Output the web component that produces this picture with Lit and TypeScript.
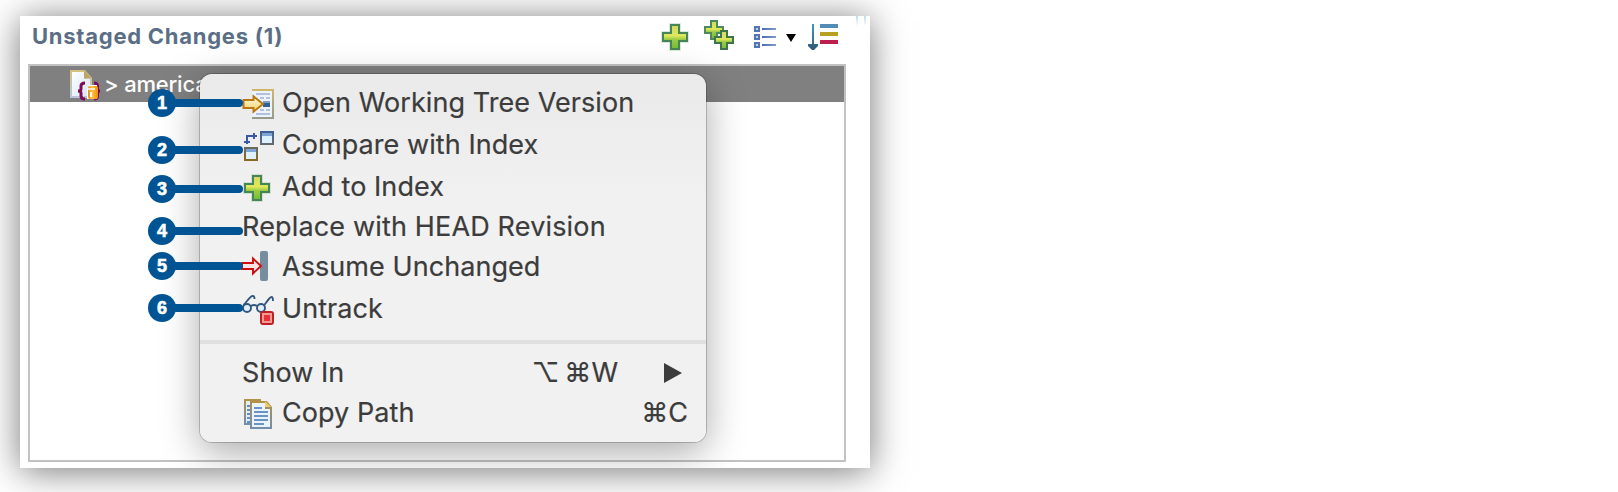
import { LitElement, html, css, svg, nothing } from "lit";
import { customElement, property } from "lit/decorators.js";

const plus = svg`
  <path d="M9 1h10v8h8v10h-8v8H9v-8H1V9h8z" fill="none" stroke="#8fb79a" stroke-opacity=".45" stroke-width="1.400"/>
  <path d="M10 2h8v8h8v8h-8v8h-8v-8H2v-8h8z" fill="url(#g)" stroke="#468556" stroke-width="2"/>`;
const plusGradient = svg`<defs><linearGradient id="g" x1="0" y1="0" x2="0" y2="1">
  <stop offset="0" stop-color="#d0d860"/><stop offset=".45" stop-color="#dfe95c"/>
  <stop offset=".6" stop-color="#9ccb45"/><stop offset="1" stop-color="#74bb35"/></linearGradient></defs>`;

const icons: Record<string, unknown> = {
  open: svg`
    <defs><linearGradient id="e" x1="0" y1="0" x2="0" y2="1"><stop offset="0" stop-color="#cdb86b"/><stop offset="1" stop-color="#979a8c"/></linearGradient>
    <linearGradient id="a" x1="0" y1="0" x2="0" y2="1"><stop offset="0" stop-color="#fffbe6"/><stop offset="1" stop-color="#f6cf62"/></linearGradient></defs>
    <path d="M10 3h22v30H10z" fill="url(#e)"/><path d="M10 5h20v26H10z" fill="#edf3fb"/>
    <path d="M14 8h14M18 12h4M24 12h4M18 24h4M24 24h4M14 28h14" stroke="#b3c0dd" stroke-width="2"/>
    <path d="M21 15h7v6h-7z" fill="#2f5f9c"/><path d="M21 15h7v2h-7z" fill="#7a9cc6"/>
    <path d="M1.500 14h10V10.300L21 18l-9.500 7.700V22h-10z" fill="url(#a)" stroke="#b87a10" stroke-width="2"/>`,
  compare: svg`
    <defs><linearGradient id="w" x1="0" y1="0" x2="0" y2="1"><stop offset="0" stop-color="#3d5f95"/><stop offset=".35" stop-color="#5b6a78"/><stop offset="1" stop-color="#8c6a1e"/></linearGradient></defs>
    <path d="M18 3h14v14H18zM2 19h14v14H2z" fill="url(#w)"/>
    <path d="M20 8h10v7H20zM4 24h10v7H4z" fill="#dff1fd"/>
    <path d="M20 5h10v3H20zM4 21h10v3H4z" fill="#7fa5d6"/>
    <path d="M5 16V8h10M2 14h6M12 5v6" fill="none" stroke="#3a57a8" stroke-width="2"/>`,
  plus: svg`${plusGradient}<g transform="translate(1 4)">${plus}</g>`,
  add: svg`${plusGradient}${plus}`,
  addAll: svg`${plusGradient}
    <path d="M7 1h6v6h6v6h-6v6H7v-6H1V7h6z" fill="url(#g)" stroke="#4d8a5e" stroke-width="2"/>
    <path d="M7 1h6v6h6v6h-6v6H7v-6H1V7h6z" transform="translate(10 10)" fill="url(#g)" stroke="#3f7450" stroke-width="2"/>`,
  assume: svg`<rect x="18" y="1" width="8" height="30" rx="2" fill="#778c9c"/>
    <path d="M0 13h11V8.500l8 7.500-8 7.500V19H0z" fill="#fbe3e3" stroke="#d00d0d" stroke-width="1.900"/>`,
  untrack: svg`<g fill="none" stroke="#34557d" stroke-width="1.900">
    <circle cx="5" cy="16" r="4" fill="#e1edf7"/><circle cx="19" cy="16" r="4" fill="#e1edf7"/>
    <path d="M9 14q3-2 6 0M1.500 13C4 11 8 4 10.500 4q2-.5 2 3M22 13.500C24 11 27.500 5 29.500 5q1.500 0 1.500 4"/></g>
    <rect x="19" y="20" width="12" height="12" rx="2" fill="#f0b9b4" stroke="#bd2025" stroke-width="2"/>
    <path d="M21 22h8v8h-8z" fill="#e8313a"/><path d="M21 22h8v8h-8z" fill="none" stroke="#f39a94" stroke-width="2"/>`,
  copy: svg`
    <defs><linearGradient id="c" x1="0" y1="0" x2="0" y2="1"><stop offset="0" stop-color="#b39245"/><stop offset="1" stop-color="#708eae"/></linearGradient></defs>
    <path d="M2 3h17v26H2z" fill="url(#c)"/><path d="M4 5h12v22H4z" fill="#e4eef9"/>
    <path d="M5 10h3M5 14h3M5 18h3M5 22h3M5 26h3" stroke="#5f8fc4" stroke-width="2"/>
    <path d="M8 5h17l5 6v22H8z" fill="url(#c)"/><path d="M10 7h13v6h5v18H10z" fill="#eaf3fc"/>
    <path d="M23 5l6 6h-6z" fill="#f0cb70"/>
    <path d="M12 12h8M12 16h14M12 20h14M12 24h14M12 28h10" stroke="#6a94c4" stroke-width="2"/>`,
  list: svg`<defs><linearGradient id="l"><stop offset="0" stop-color="#4c6eae"/><stop offset="1" stop-color="#7c9ccc"/></linearGradient></defs>
    <path d="M0 0h6v6H0zM0 8h6v6H0zM0 16h6v6H0z" fill="#5474b2"/><path d="M2 2h2v2H2zM2 10h2v2H2zM2 18h2v2H2z" fill="#c3d0ea"/>
    <path d="M8 2h14v2H8zM8 10h14v2H8zM8 18h14v2H8z" fill="url(#l)"/>`,
  caret: svg`<path d="M0 0h10L5 8z" fill="#000"/>`,
  sort: svg`<defs><linearGradient id="s" x1="0" y1="0" x2="0" y2="1"><stop offset="0" stop-color="#4a96c8"/><stop offset="1" stop-color="#2f5878"/></linearGradient></defs>
    <path d="M4 0h2v20h4v2l-4 4H4l-4-4v-2h4z" fill="url(#s)"/>
    <path d="M12 0h18v4H12z" fill="#518db5"/><path d="M12 8h18v4H12z" fill="#b9a022"/><path d="M12 16h18v4H12z" fill="#bd204f"/>`,
  file: svg`<defs><linearGradient id="p" x1="0" y1="0" x2="0" y2="1"><stop offset="0" stop-color="#d6c27c"/><stop offset="1" stop-color="#b7c4dc"/></linearGradient>
    <linearGradient id="q" x1="0" y1="0" x2="1" y2="1"><stop offset="0" stop-color="#fff"/><stop offset="1" stop-color="#d5e5f6"/></linearGradient>
    <linearGradient id="o"><stop offset="0" stop-color="#e58a10"/><stop offset=".4" stop-color="#ffc445"/><stop offset="1" stop-color="#ef8f05"/></linearGradient></defs>
    <path d="M0 0h15l7 8v20H0z" fill="url(#p)"/><path d="M2 2h12v7h6v17H2z" fill="url(#q)"/><path d="M14 0l7 8h-7z" fill="#bda565"/>
    <path d="M15 13q-4 0-4 3v3q0 2-3 2 3 0 3 2v3q0 3 4 3M24 13q3.500 0 3.500 3v3q0 2 2.500 2-2.500 0-2.500 2v3q0 3-3.500 3" fill="none" stroke="#7d0b57" stroke-width="3"/>
    <path d="M17 19l2-4h8v14H17z" fill="#fff"/>
    <rect x="18" y="16" width="10" height="13" rx="2" fill="url(#o)"/><path d="M18 19h7" stroke="#fff" stroke-width="1.500"/><path d="M21 22v5" stroke="#fff" stroke-width="2"/>`,
};

@customElement("git-icon")
class GitIcon extends LitElement {
  @property() name = "";
  @property({ type: Number }) w = 32;
  @property({ type: Number }) h = 32;
  static styles = css`:host { display: block; flex: none; } svg { display: block; overflow: visible; }`;
  render() {
    return html`<svg width=${this.w} height=${this.h} viewBox="0 0 ${this.w} ${this.h}">${icons[this.name]}</svg>`;
  }
}

interface Item { label: string; icon?: string; mod?: string; keys?: string; sub?: boolean; size: string; }
const main: Item[] = [
  { label: "Open Working Tree Version", icon: "open", size: "tall" },
  { label: "Compare with Index", icon: "compare", size: "tall" },
  { label: "Add to Index", icon: "plus", size: "tall" },
  { label: "Replace with HEAD Revision", size: "short" },
  { label: "Assume Unchanged", icon: "assume", size: "tall" },
  { label: "Untrack", icon: "untrack", size: "tall" },
];
const extra: Item[] = [
  { label: "Show In", mod: "⌥", keys: "⌘W", sub: true, size: "mid" },
  { label: "Copy Path", icon: "copy", keys: "⌘C", size: "mid" },
];

@customElement("app-root")
class AppRoot extends LitElement {
  static styles = css`
    :host { display: block; width: 1618px; height: 492px; background: #fff; overflow: hidden; font-family: Inter, sans-serif; }
    .page { padding: 16px 0 0 20px; height: 476px; }
    .panel { position: relative; box-sizing: border-box; width: 850px; height: 452px; padding: 0 24px 6px 8px; background: #fff; overflow: hidden;
      display: flex; flex-direction: column; box-shadow: 0 3px 34px rgba(0,0,0,.54); }
    .head { display: flex; height: 48px; align-items: flex-start; }
    .title { flex: 1; margin: 0; padding: 6px 0 0 4px; font-size: 22px; line-height: 28px; font-weight: 700; color: #5a6f86; white-space: nowrap; letter-spacing: .74px; }
    .tools { display: flex; padding-right: 8px; }
    .i-add { margin: 7px 15px 0 0; } .i-all { margin: 4px 18px 0 0; } .i-list { margin: 10px 10px 0 0; }
    .i-caret { margin: 18px 12px 0 0; } .i-sort { margin-top: 8px; }
    .ticks { position: absolute; right: 4px; top: 0; width: 10px; height: 10px; display: flex; justify-content: space-between; }
    .tick { width: 2px; background: linear-gradient(#bcdcf5, #fff); }
    .tree { flex: 1; border: 2px solid #c2c2c2; }
    .row { display: flex; align-items: flex-start; height: 36px; padding-left: 40px; background: #808080; color: #fff; font-size: 22px; line-height: 37px; white-space: pre; }
    .row git-icon { margin: 4px 2px 0 0; }
    .file { letter-spacing: -.2px; font-weight: 500; }
    .menu { position: absolute; left: 180px; top: 58px; width: 506px; height: 368px; box-sizing: border-box; padding: 7px 0 0; border-radius: 12px;
      background: linear-gradient(#eaeaea, #f1f1f1 35%, #f1f1f1); box-shadow: 0 0 0 1px rgba(0,0,0,.2), 0 10px 38px rgba(0,0,0,.34); color: #3c3c3c; }
    .item { display: flex; align-items: center; padding: 0 18px 0 42px; font-size: 27px; white-space: nowrap; -webkit-text-stroke: .2px #3c3c3c; }
    .tall { height: 42px; } .short { height: 38px; } .mid { height: 40px; }
    .item git-icon { margin-right: 8px; }
    .label { flex: 1; line-height: 32px; padding-top: 2px; letter-spacing: .06px; }
    .short .label { letter-spacing: .16px; }
    .keys { line-height: 32px; padding-top: 2px; }
    .mod { margin-right: 5px; }
    .arrow { width: 0; height: 0; margin: 2px 6px 0 46px; border: solid transparent; border-width: 10px 0 10px 18px; border-left-color: #3c3c3c; }
    .sep { height: 4px; margin: 11px 0 8px; background: #e0e0e0; }
    .mark { position: absolute; left: 128px; width: 100px; height: 28px; display: flex; align-items: center; }
    .dot { width: 28px; height: 28px; border-radius: 50%; background: #005493; color: #fff; font: 700 18px/28px "Liberation Sans", sans-serif; -webkit-text-stroke: .6px #fff; text-align: center; }
    .lead { width: 69px; height: 8px; margin-left: -2px; border-radius: 0 4px 4px 0; background: #005493; }
    .m1 { top: 73px; } .m2 { top: 120px; } .m3 { top: 159px; } .m4 { top: 201px; } .m5 { top: 236px; } .m6 { top: 278px; }
  `;
  private item(i: Item) {
    return html`<div class="item ${i.size}">
      ${i.icon ? html`<git-icon name=${i.icon}></git-icon>` : nothing}
      <span class="label">${i.label}</span>
      ${i.keys ? html`<span class="keys">${i.mod ? html`<span class="mod">${i.mod}</span>` : nothing}${i.keys}</span>` : nothing}
      ${i.sub ? html`<span class="arrow"></span>` : nothing}
    </div>`;
  }
  render() {
    return html`<div class="page"><section class="panel">
      <header class="head">
        <h1 class="title">Unstaged Changes (1)</h1>
        <div class="tools">
          <git-icon class="i-add" name="add" w="28" h="28"></git-icon>
          <git-icon class="i-all" name="addAll" w="32" h="32"></git-icon>
          <git-icon class="i-list" name="list" w="22" h="24"></git-icon>
          <git-icon class="i-caret" name="caret" w="10" h="8"></git-icon>
          <git-icon class="i-sort" name="sort" w="30" h="26"></git-icon>
        </div>
      </header>
      <div class="ticks"><i class="tick"></i><i class="tick"></i></div>
      <div class="tree"><div class="row"><git-icon name="file" w="32" h="30"></git-icon><span class="file">&gt; america</span></div></div>
      <nav class="menu">${main.map((i) => this.item(i))}<div class="sep"></div>${extra.map((i) => this.item(i))}</nav>
      ${[1, 2, 3, 4, 5, 6].map((n) => html`<div class="mark m${n}"><span class="dot">${n}</span><span class="lead"></span></div>`)}
    </section></div>`;
  }
}
